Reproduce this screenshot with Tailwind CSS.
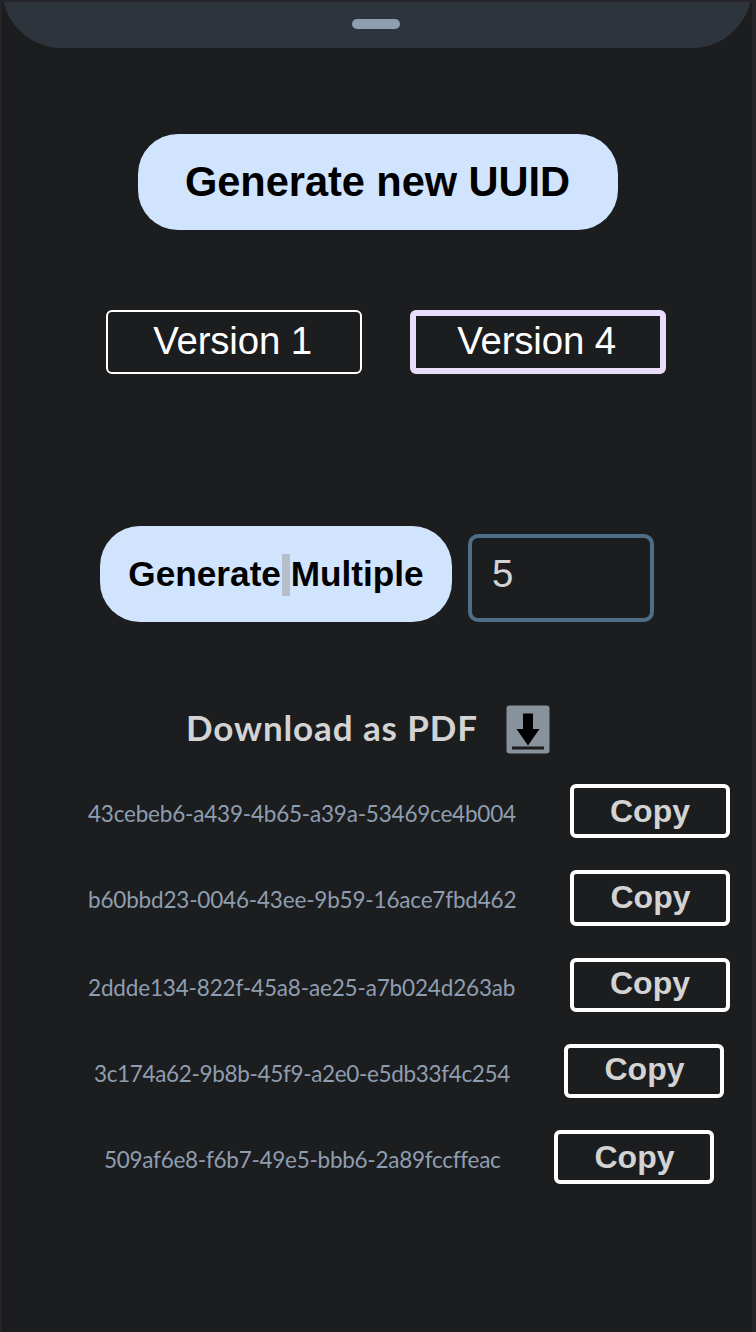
<!DOCTYPE html>
<html lang="en">
<head>
<meta charset="utf-8">
<title>UUID Generator</title>
<script src="https://cdn.jsdelivr.net/npm/@tailwindcss/browser@4"></script>
</head>
<body class="h-[1332px] w-[756px] overflow-hidden bg-[#252428] pt-[2px] pr-1 pl-[2px] font-['Liberation_Sans',sans-serif]">
<main class="flex h-[1330px] w-[750px] flex-col overflow-hidden bg-[#1c1d1f]">
  <header class="-mt-[14px] flex h-[60px] shrink-0 items-end justify-center rounded-b-[60px] bg-[#2d343c] pr-[2px] pb-[19px]">
    <div class="h-[10px] w-12 rounded-full bg-[#8f9db0]"></div>
  </header>

  <button class="mt-[86px] ml-[136px] h-24 w-[480px] shrink-0 rounded-[40px] bg-[#d0e4fd] pr-px text-[41.6px] leading-[96px] font-bold tracking-[-0.05px] text-black">Generate new UUID</button>

  <div class="mt-20 ml-[104px] flex shrink-0 gap-12 text-[38.4px] tracking-[-0.15px] text-white">
    <button class="flex h-16 w-64 items-center justify-center rounded-md border-2 border-white pr-[3px] pb-[2px]"><span>Version 1</span></button>
    <button class="flex h-16 w-64 items-center justify-center rounded-md border-[6px] border-[#eadcfb] pr-[3px] pb-[2px]"><span>Version 4</span></button>
  </div>

  <div class="mt-[152px] ml-[98px] flex shrink-0 gap-4">
    <button class="h-24 w-[352px] rounded-[40px] bg-[#d0e4fd] text-[35.2px] leading-[96px] font-bold whitespace-pre text-black">Generate<span class="relative"> <span class="absolute top-0 left-[1px] h-[42px] w-2 bg-[#b5bec9]"></span></span>Multiple</button>
    <div class="mt-2 h-[88px] w-[186px] rounded-[10px] border-4 border-[#4e6e87] pt-[14px] pl-5 text-[38.4px] leading-[44px] text-[#d3d3d3]">5</div>
  </div>

  <div class="mt-[83px] ml-[184px] flex shrink-0 items-start font-['Lato',sans-serif] text-[#d3d3d3]">
    <span class="w-80 text-[35px] leading-[44px] font-bold tracking-[0.88px] whitespace-nowrap">Download as PDF</span>
    <svg class="h-[49px] w-[44px]" viewBox="0 0 44 49">
      <rect x=".5" y=".5" width="43" height="48" rx="3" fill="#87929d"/>
      <path d="M17 8.500h10v15.500h6.500L22 40.500 10.500 24H17z" fill="#000"/>
      <path d="M6 43h32" stroke="#1c1d1f" stroke-width="3"/>
    </svg>
  </div>

  <div class="mt-[30px] flex shrink-0 flex-col font-['Lato',sans-serif] text-[22.5px] text-[#8f9db0]">
    <div class="flex h-[86px] pl-[86px]"><span class="w-[482px] pt-[15px] leading-[30px] tracking-[-0.2px]">43cebeb6-a439-4b65-a39a-53469ce4b004</span><button class="h-[54px] w-40 rounded-md border-4 border-white font-['Liberation_Sans',sans-serif] text-[32px] leading-[46px] font-bold text-[#d3d3d3]">Copy</button></div>
    <div class="flex h-[88px] pl-[86px]"><span class="w-[482px] pt-[15px] leading-[30px] tracking-[-0.18px]">b60bbd23-0046-43ee-9b59-16ace7fbd462</span><button class="h-[56px] w-40 rounded-md border-4 border-white pb-[2px] pl-px font-['Liberation_Sans',sans-serif] text-[32px] leading-[46px] font-bold text-[#d3d3d3]">Copy</button></div>
    <div class="flex h-[86px] pl-[86px]"><span class="w-[482px] pt-[15px] leading-[30px] tracking-[-0.16px]">2ddde134-822f-45a8-ae25-a7b024d263ab</span><button class="h-[54px] w-40 rounded-md border-4 border-white pb-1 font-['Liberation_Sans',sans-serif] text-[32px] leading-[42px] font-bold text-[#d3d3d3]">Copy</button></div>
    <div class="flex h-[86px] pl-[92px]"><span class="w-[470px] pt-[15px] leading-[30px] tracking-[-0.34px]">3c174a62-9b8b-45f9-a2e0-e5db33f4c254</span><button class="h-[54px] w-40 rounded-md border-4 border-white pb-1 pl-px font-['Liberation_Sans',sans-serif] text-[32px] leading-[42px] font-bold text-[#d3d3d3]">Copy</button></div>
    <div class="flex h-[86px] pl-[102px]"><span class="w-[450px] pt-[15px] leading-[30px] tracking-[-0.27px]">509af6e8-f6b7-49e5-bbb6-2a89fccffeac</span><button class="h-[54px] w-40 rounded-md border-4 border-white pl-px font-['Liberation_Sans',sans-serif] text-[32px] leading-[46px] font-bold text-[#d3d3d3]">Copy</button></div>
  </div>
</main>
</body>
</html>
